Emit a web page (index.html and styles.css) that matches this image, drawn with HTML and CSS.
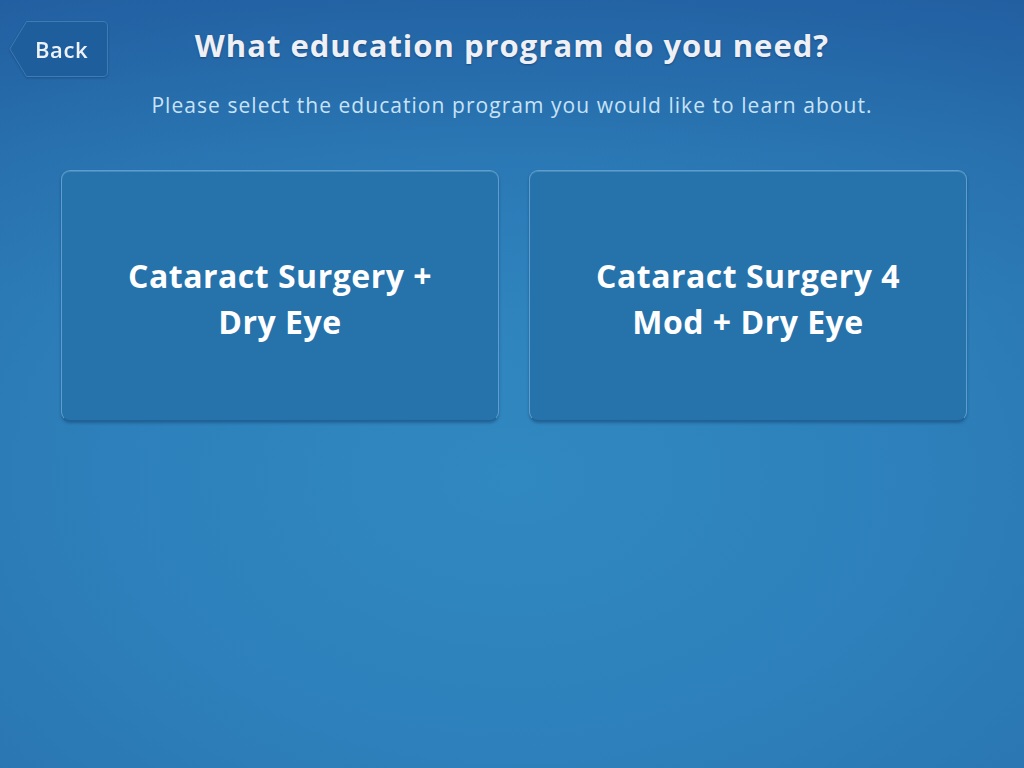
FILE: index.html
```html
<!DOCTYPE html>
<html lang="en">
<head>
<meta charset="utf-8">
<title>Education program</title>
<link rel="stylesheet" href="styles.css">
</head>
<body>
<div class="screen">
  <header class="header">
    <div class="header-left">
      <button class="back">
        <svg class="back-shape" width="99" height="56" viewBox="0 0 99 56" aria-hidden="true">
          <path d="M17.5 0.5 H94 Q98.5 0.5 98.5 5 V51 Q98.5 55.5 94 55.5 H17.5 L0.8 28 Z" fill="#1f5e9d" stroke="#3f7cb4" stroke-width="1"/>
        </svg>
        <span class="back-label">Back</span>
      </button>
    </div>
    <h1 class="title">What education program do you need?</h1>
    <div class="header-right"></div>
  </header>
  <p class="subtitle">Please select the education program you would like to learn about.</p>
  <main class="cards">
    <button class="card">Cataract Surgery +<br>Dry Eye</button>
    <button class="card">Cataract Surgery 4<br>Mod + Dry Eye</button>
  </main>
</div>
</body>
</html>
```
FILE: styles.css
```css
* { box-sizing: border-box; }
html, body { margin: 0; padding: 0; }
body {
  width: 1024px;
  height: 768px;
  overflow: hidden;
  font-family: "Open Sans", Lato, sans-serif;
  background: radial-gradient(ellipse 900px 620px at 50% 62%, #3189c1 0%, #2d80bb 45%, #2a76b2 75%, #2669a8 100%);
  background-color: #2a76b2;
}
.screen {
  width: 1024px;
  height: 768px;
  background: linear-gradient(to bottom, rgba(30,85,155,0.55) 0%, rgba(30,85,155,0.15) 20%, rgba(30,85,155,0) 40%);
  display: flex;
  flex-direction: column;
}
.header {
  display: grid;
  grid-template-columns: 1fr auto 1fr;
  align-items: center;
  padding-top: 21px;
  height: 76px;
}
.header-left { padding-left: 9px; display: flex; }
.back {
  position: relative;
  width: 99px;
  height: 56px;
  border: 0;
  padding: 0;
  background: transparent;
  cursor: pointer;
  font-family: inherit;
  text-align: left;
  filter: drop-shadow(0 1px 1px rgba(10,40,80,0.35));
}
.back-shape { position: absolute; left: 0; top: 0; }
.back-label {
  position: relative;
  display: block;
  padding-left: 26px;
  color: #eef3fa;
  font-size: 22px;
  font-weight: 600;
  line-height: 53px;
  letter-spacing: 0.6px;
}
.title {
  margin: 0;
  color: #eef0f6;
  font-size: 31px;
  font-weight: 700;
  letter-spacing: 1px;
  text-shadow: 0 1px 2px rgba(10,35,75,0.45);
  white-space: nowrap;
  position: relative;
  top: -4px;
}
.subtitle {
  margin: 15px 0 0;
  text-align: center;
  color: #c8e3f6;
  font-size: 21px;
  font-weight: 400;
  letter-spacing: 1.05px;
}
.cards {
  display: grid;
  grid-template-columns: 438px 438px;
  column-gap: 30px;
  justify-content: center;
  margin-top: 51px;
  padding-left: 4px;
}
.card {
  height: 251px;
  border-radius: 9px;
  background: #2672ab;
  border: 1px solid rgba(140,195,235,0.55);
  border-bottom-color: rgba(30,80,130,0.5);
  box-shadow: 0 2px 3px rgba(15,55,100,0.45), inset 0 1px 0 rgba(160,210,245,0.25);
  color: #ffffff;
  font-family: inherit;
  font-size: 32px;
  font-weight: 700;
  line-height: 46px;
  letter-spacing: 0.5px;
  text-align: center;
  padding: 6px 0 0;
  cursor: pointer;
}
```
